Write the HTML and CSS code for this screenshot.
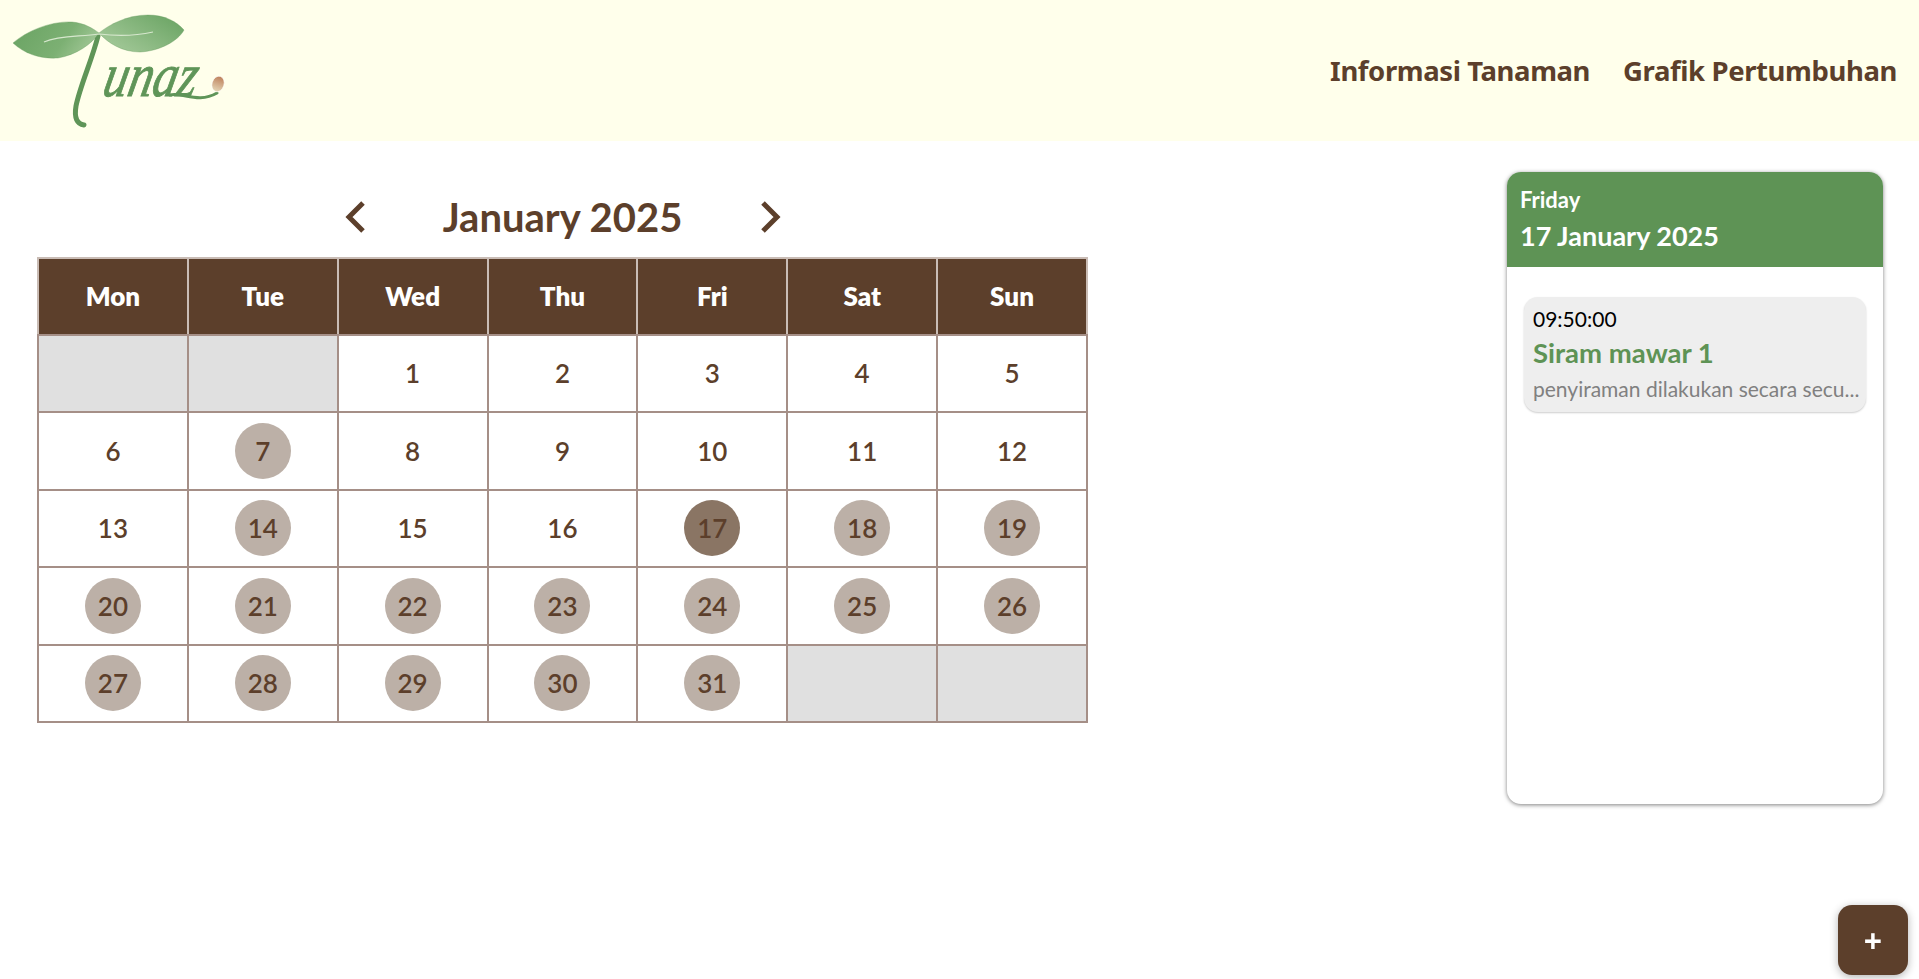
FILE: index.html
```html
<!DOCTYPE html>
<html lang="id">
<head>
  <meta charset="UTF-8">
  <meta name="viewport" content="width=device-width, initial-scale=1.0">
  <title>Tunaz</title>
  <link rel="stylesheet" href="styles.css">
</head>
<body>
  <header class="topbar">
    <a class="logo" href="#" aria-label="Tunaz">
      <svg width="240" height="141" viewBox="0 0 240 141">
        <defs>
          <linearGradient id="leafLeft" x1="0" y1="0.3" x2="1" y2="0.6">
            <stop offset="0" stop-color="#6ba464"/>
            <stop offset="0.6" stop-color="#7cb073"/>
            <stop offset="1" stop-color="#a4c999"/>
          </linearGradient>
          <linearGradient id="leafRight" x1="0" y1="0.9" x2="1" y2="0.2">
            <stop offset="0" stop-color="#a8cc9d"/>
            <stop offset="1" stop-color="#6ca565"/>
          </linearGradient>
          <linearGradient id="seed" x1="0" y1="0" x2="0" y2="1">
            <stop offset="0" stop-color="#bd7f5a"/>
            <stop offset="1" stop-color="#e6d8b8"/>
          </linearGradient>
        </defs>
        <path class="stem" d="M98 36 C92 60 80 86 76 106 C74 118 77 124 84 125"/>
        <path class="leaf" fill="url(#leafLeft)" d="M13 43 C28 30 52 21 72 22 C84 23 92 28 99 33 C92 44 76 55 58 58 C40 59 25 54 13 43 Z"/>
        <path class="leaf" fill="url(#leafRight)" d="M99 33 C110 24 128 15 148 15 C164 15 176 21 184 30 C178 41 160 51 140 52 C122 52 108 43 99 33 Z"/>
        <path class="vein" d="M44 42 C60 35 80 37 99 34 C115 36 135 36 153 32"/>
        <text class="logo-word" transform="translate(101 96) skewX(-12) scale(1.12 1.4)">unaz</text>
        <path class="tail" d="M170 95 C183 92 198 104 217 93"/>
        <ellipse class="seed" fill="url(#seed)" cx="218" cy="84" rx="6" ry="8" transform="rotate(18 218 84)"/>
      </svg>
    </a>
    <nav class="nav">
      <a href="#">Informasi Tanaman</a>
      <a href="#">Grafik Pertumbuhan</a>
    </nav>
  </header>

  <main class="content">
    <section class="calendar">
      <div class="calendar-head">
        <button class="arrow" aria-label="Previous month">
          <svg width="22" height="32" viewBox="0 0 22 32"><path d="M19 2 L5 16 L19 30"/></svg>
        </button>
        <h2>January 2025</h2>
        <button class="arrow" aria-label="Next month">
          <svg width="22" height="32" viewBox="0 0 22 32"><path d="M3 2 L17 16 L3 30"/></svg>
        </button>
      </div>
      <table class="month">
        <thead>
          <tr><th>Mon</th><th>Tue</th><th>Wed</th><th>Thu</th><th>Fri</th><th>Sat</th><th>Sun</th></tr>
        </thead>
        <tbody>
          <tr>
            <td class="empty"></td>
            <td class="empty"></td>
            <td><span class="day">1</span></td>
            <td><span class="day">2</span></td>
            <td><span class="day">3</span></td>
            <td><span class="day">4</span></td>
            <td><span class="day">5</span></td>
          </tr>
          <tr>
            <td><span class="day">6</span></td>
            <td><span class="day has-task">7</span></td>
            <td><span class="day">8</span></td>
            <td><span class="day">9</span></td>
            <td><span class="day">10</span></td>
            <td><span class="day">11</span></td>
            <td><span class="day">12</span></td>
          </tr>
          <tr>
            <td><span class="day">13</span></td>
            <td><span class="day has-task">14</span></td>
            <td><span class="day">15</span></td>
            <td><span class="day">16</span></td>
            <td><span class="day selected">17</span></td>
            <td><span class="day has-task">18</span></td>
            <td><span class="day has-task">19</span></td>
          </tr>
          <tr>
            <td><span class="day has-task">20</span></td>
            <td><span class="day has-task">21</span></td>
            <td><span class="day has-task">22</span></td>
            <td><span class="day has-task">23</span></td>
            <td><span class="day has-task">24</span></td>
            <td><span class="day has-task">25</span></td>
            <td><span class="day has-task">26</span></td>
          </tr>
          <tr>
            <td><span class="day has-task">27</span></td>
            <td><span class="day has-task">28</span></td>
            <td><span class="day has-task">29</span></td>
            <td><span class="day has-task">30</span></td>
            <td><span class="day has-task">31</span></td>
            <td class="empty"></td>
            <td class="empty"></td>
          </tr>
        </tbody>
      </table>
    </section>

    <aside class="agenda">
      <div class="agenda-head">
        <div class="agenda-day">Friday</div>
        <div class="agenda-date">17 January 2025</div>
      </div>
      <div class="agenda-list">
        <div class="task">
          <div class="task-time">09:50:00</div>
          <div class="task-title">Siram mawar 1</div>
          <div class="task-desc">penyiraman dilakukan secara secu...</div>
        </div>
      </div>
    </aside>
  </main>

  <button class="add-button" aria-label="Tambah">+</button>
</body>
</html>
```

FILE: styles.css
```css
body {
  font-family: Lato, sans-serif;
  color: #5c3f2b;
  margin: 0;
  padding: 0;
  background-color: #fff;
  height: 979px;
  overflow: hidden;
}

.topbar {
  display: flex;
  justify-content: space-between;
  align-items: center;
  height: 141px;
  padding-right: 22px;
  background-color: #ffffeb;
}

.logo {
  display: block;
  height: 141px;
}

.stem,
.tail {
  fill: none;
  stroke: #5f9558;
  stroke-linecap: round;
}

.stem {
  stroke-width: 5;
}

.tail {
  stroke-width: 3;
}

.leaf {
  stroke: #5f9558;
  stroke-opacity: 0.35;
  stroke-width: 1;
}

.vein {
  fill: none;
  stroke: #d6e7cd;
  stroke-width: 1.2;
}

.logo-word {
  font-family: "Liberation Serif", serif;
  font-style: italic;
  font-size: 44px;
  fill: #5f9558;
  stroke: #5f9558;
  stroke-width: 0.7;
}

.seed {
  stroke: #fff;
  stroke-width: 0.6;
}

.nav {
  display: flex;
  gap: 33px;
}

.nav a {
  font-family: "Noto Sans", sans-serif;
  font-weight: 700;
  font-size: 27.5px;
  letter-spacing: -0.4px;
  color: #5c3f2b;
  text-decoration: none;
}

.content {
  display: flex;
  justify-content: space-between;
  align-items: flex-start;
  padding: 31px 36px 0 37px;
}

.calendar {
  width: 1051px;
}

.calendar-head {
  display: flex;
  justify-content: center;
  align-items: center;
  gap: 77px;
  height: 81px;
  padding-top: 4px;
}

.calendar-head h2 {
  margin: 0;
  width: 240px;
  text-align: center;
  font-size: 40px;
  font-weight: 700;
  line-height: 46px;
}

.arrow {
  display: flex;
  padding: 0;
  border: none;
  background: none;
  cursor: pointer;
}

.arrow path {
  fill: none;
  stroke: #5c3f2b;
  stroke-width: 5;
}

.month {
  width: 1051px;
  table-layout: fixed;
  border-collapse: collapse;
}

.month th,
.month td {
  border: 2px solid #a58f87;
  text-align: center;
  padding: 0;
  height: 75.5px;
}

.month th {
  height: 74.5px;
  background-color: #5c3f2b;
  color: #fff;
  font-size: 26px;
  font-weight: 800;
  border-color: #c9bcb5;
  border-bottom-color: #a58f87;
}

.month td.empty {
  background-color: #e0e0e0;
}

.day {
  display: inline-flex;
  justify-content: center;
  align-items: center;
  width: 56px;
  height: 56px;
  border-radius: 50%;
  font-size: 26px;
  font-weight: 600;
  vertical-align: middle;
}

.day.has-task {
  background-color: #bcb0a7;
}

.day.selected {
  background-color: #8a7564;
}

.agenda {
  width: 376px;
  height: 632px;
  border-radius: 14px;
  background-color: #fff;
  box-shadow: 0 1px 4px rgba(0, 0, 0, 0.5);
  overflow: hidden;
}

.agenda-head {
  height: 95px;
  box-sizing: border-box;
  padding: 15px 13px 0;
  background-color: #5e9355;
  color: #fff;
}

.agenda-day {
  font-size: 22px;
  font-weight: 700;
  line-height: 26px;
}

.agenda-date {
  font-size: 27px;
  font-weight: 700;
  line-height: 32px;
  margin-top: 7px;
}

.agenda-list {
  padding: 30px 17px;
}

.task {
  height: 115px;
  box-sizing: border-box;
  padding: 9px 6px 9px 9px;
  border-radius: 14px;
  background-color: #eee;
  box-shadow: 0 1px 2px rgba(0, 0, 0, 0.2);
}

.task-time {
  font-size: 21px;
  line-height: 26px;
  color: #000;
}

.task-title {
  font-size: 27.5px;
  font-weight: 700;
  line-height: 32px;
  margin-top: 5px;
  color: #5e9355;
}

.task-desc {
  font-size: 21px;
  line-height: 26px;
  margin-top: 7px;
  color: #808080;
  white-space: nowrap;
}

.add-button {
  position: fixed;
  right: 11px;
  bottom: 4px;
  width: 70px;
  height: 70px;
  border: none;
  border-radius: 14px;
  background-color: #5c3f2b;
  color: #fff;
  font-family: "Noto Sans", sans-serif;
  font-size: 32px;
  font-weight: 700;
  box-shadow: 0 2px 8px rgba(0, 0, 0, 0.3);
  cursor: pointer;
}
```
